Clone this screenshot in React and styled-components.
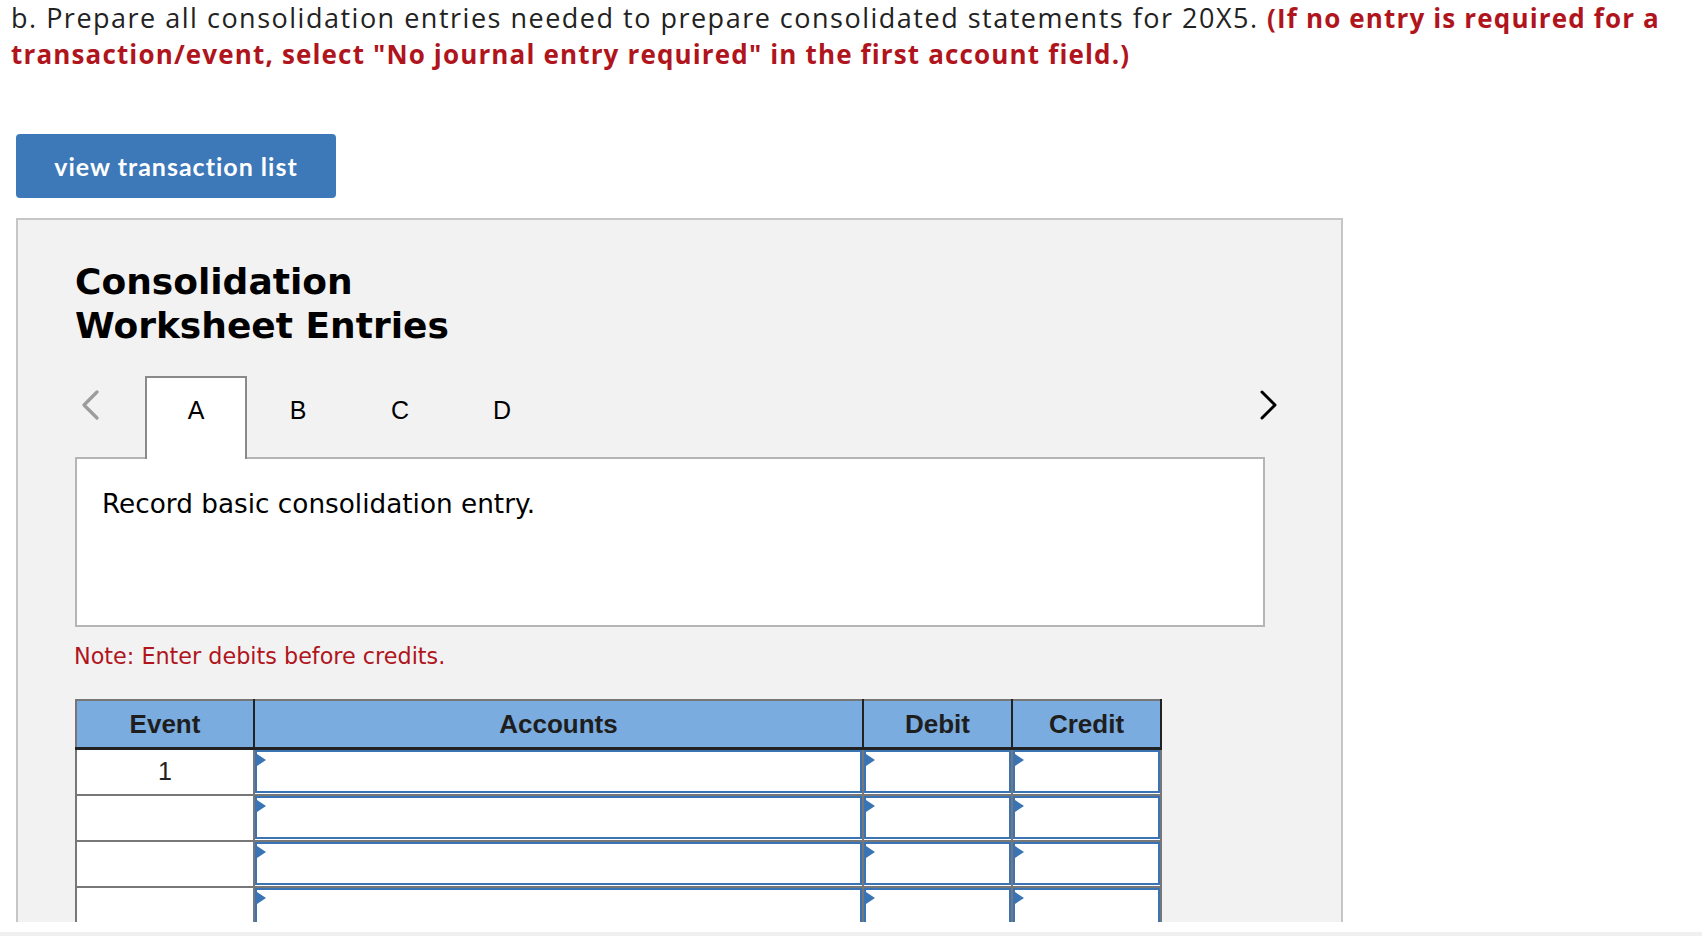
import React from 'react';
import styled, { createGlobalStyle } from 'styled-components';

const GlobalStyle = createGlobalStyle`
  html, body {
    margin: 0;
    padding: 0;
    background: #fff;
    overflow: hidden;
  }
`;

const Viewport = styled.div`
  height: 922px;
  overflow: hidden;
`;

const BottomBar = styled.div`
  height: 10px;
  border-bottom: 4px solid #f0f0f0;
  background: #fff;
`;

const Intro = styled.p`
  margin: 0;
  padding: 0 0 0 11px;
  font-family: 'Open Sans', Lato, sans-serif;
  font-size: 27px;
  line-height: 36px;
  letter-spacing: 1.5px;
  color: #222;
  white-space: nowrap;

  strong {
    font-size: 26px;
    letter-spacing: 1.15px;
    color: #b0151d;
    font-weight: 700;
  }
`;

const ViewButton = styled.button`
  display: block;
  margin: 62px 0 0 16px;
  width: 320px;
  height: 64px;
  border: none;
  border-radius: 4px;
  background: #3d78b9;
  color: #fff;
  font-family: Lato, 'Open Sans', sans-serif;
  font-size: 25px;
  font-weight: 700;
  letter-spacing: 1px;
  cursor: pointer;
`;

const Panel = styled.section`
  margin: 20px 0 0 16px;
  width: 1327px;
  box-sizing: border-box;
  border: 2px solid #c6c6c6;
  background: #f2f2f2;
  padding: 40px 0 60px 57px;
`;

const Heading = styled.h2`
  margin: 0;
  font-family: 'DejaVu Sans', Verdana, sans-serif;
  font-size: 36px;
  line-height: 44px;
  font-weight: 700;
  color: #000;
`;

const TabRow = styled.div`
  display: flex;
  align-items: stretch;
  width: 1203px;
  height: 81px;
  margin-top: 28px;
  position: relative;
  z-index: 1;
`;

const NavArrow = styled.button`
  display: flex;
  align-items: center;
  justify-content: ${p => (p.$side === 'left' ? 'flex-start' : 'flex-end')};
  width: 70px;
  padding: 0 0 0 ${p => (p.$side === 'left' ? '6px' : '0')};
  margin-left: ${p => (p.$side === 'right' ? 'auto' : '0')};
  height: 58px;
  border: none;
  background: transparent;
  cursor: pointer;
`;

const Tab = styled.div`
  width: 102px;
  box-sizing: border-box;
  display: flex;
  align-items: flex-start;
  justify-content: center;
  padding-top: 18px;
  font-family: 'Liberation Sans', Arial, sans-serif;
  font-size: 25px;
  color: #000;
  border: 2px solid ${p => (p.$active ? '#8a8a8a' : 'transparent')};
  border-bottom: none;
  background: ${p => (p.$active ? '#fff' : 'transparent')};
  margin-bottom: ${p => (p.$active ? '-2px' : '0')};
  height: ${p => (p.$active ? '83px' : '81px')};
  cursor: pointer;
`;

const Prompt = styled.div`
  width: 1190px;
  height: 170px;
  box-sizing: border-box;
  border: 2px solid #b5b5b5;
  background: #fff;
  padding: 30px 0 0 25px;
  font-family: 'DejaVu Sans', Verdana, sans-serif;
  font-size: 26.3px;
  line-height: 30px;
  color: #000;
`;

const Note = styled.p`
  margin: 16px 0 0 -1px;
  font-family: 'DejaVu Sans', Verdana, sans-serif;
  font-size: 22.3px;
  line-height: 26px;
  color: #b0151d;
`;

const Journal = styled.table`
  margin-top: 30px;
  border-collapse: collapse;
  table-layout: fixed;
  border: 2px solid #777;
  background: #fff;
`;

const HeadCell = styled.th`
  width: ${p => p.$w}px;
  height: 46px;
  padding: 0;
  background: #7aace0;
  border-left: 2px solid #222;
  border-right: 2px solid #222;
  border-top: 2px solid #777;
  border-bottom: 3px solid #222;
  font-family: 'Liberation Sans', Arial, sans-serif;
  font-size: 26px;
  font-weight: 700;
  color: #1e1e1e;
  text-align: center;

  &:first-child {
    border-left: 2px solid #777;
  }
`;

const Row = styled.tr`
  height: 46px;
`;

const EventCell = styled.td`
  padding: 0;
  border: 2px solid #777;
  text-align: center;
  font-family: 'Liberation Sans', Arial, sans-serif;
  font-size: 25px;
  color: #222;
`;

const InputCell = styled.td`
  padding: 0;
  border: 2px solid #777;
  height: 43px;
`;

const InputBox = styled.div`
  position: relative;
  height: 39px;
  border: 2px solid #3a74b4;
  background: #fff;

  &::before {
    content: '';
    position: absolute;
    top: 2px;
    left: 0;
    border-left: 9px solid #3a74b4;
    border-top: 6px solid transparent;
    border-bottom: 6px solid transparent;
  }
`;

const Chevron = ({ dir, color, width }) => (
  <svg width="20" height="30" viewBox="0 0 20 30" fill="none">
    <polyline
      points={dir === 'left' ? '16,2 3,15 16,28' : '4,2 17,15 4,28'}
      stroke={color}
      strokeWidth={width}
      strokeLinecap="round"
      strokeLinejoin="round"
    />
  </svg>
);

const columns = [
  { label: 'Event', w: 176 },
  { label: 'Accounts', w: 607 },
  { label: 'Debit', w: 147 },
  { label: 'Credit', w: 147 },
];

const rows = ['1', '', '', '', ''];

export default function App() {
  return (
    <>
      <GlobalStyle />
      <Viewport>
        <Intro>
          b. Prepare all consolidation entries needed to prepare consolidated statements for 20X5.{' '}
          <strong>(If no entry is required for a</strong>
          <br />
          <strong>transaction/event, select "No journal entry required" in the first account field.)</strong>
        </Intro>

        <ViewButton>view transaction list</ViewButton>

        <Panel>
          <Heading>
            Consolidation
            <br />
            Worksheet Entries
          </Heading>

          <TabRow>
            <NavArrow $side="left" aria-label="previous">
              <Chevron dir="left" color="#9c9c9c" width={3.2} />
            </NavArrow>
            {['A', 'B', 'C', 'D'].map(t => (
              <Tab key={t} $active={t === 'A'}>
                {t}
              </Tab>
            ))}
            <NavArrow $side="right" aria-label="next">
              <Chevron dir="right" color="#000" width={3} />
            </NavArrow>
          </TabRow>

          <Prompt>Record basic consolidation entry.</Prompt>

          <Note>Note: Enter debits before credits.</Note>

          <Journal>
            <thead>
              <tr>
                {columns.map(c => (
                  <HeadCell key={c.label} $w={c.w}>
                    {c.label}
                  </HeadCell>
                ))}
              </tr>
            </thead>
            <tbody>
              {rows.map((ev, i) => (
                <Row key={i}>
                  <EventCell>{ev}</EventCell>
                  <InputCell>
                    <InputBox />
                  </InputCell>
                  <InputCell>
                    <InputBox />
                  </InputCell>
                  <InputCell>
                    <InputBox />
                  </InputCell>
                </Row>
              ))}
            </tbody>
          </Journal>
        </Panel>
      </Viewport>
      <BottomBar />
    </>
  );
}
